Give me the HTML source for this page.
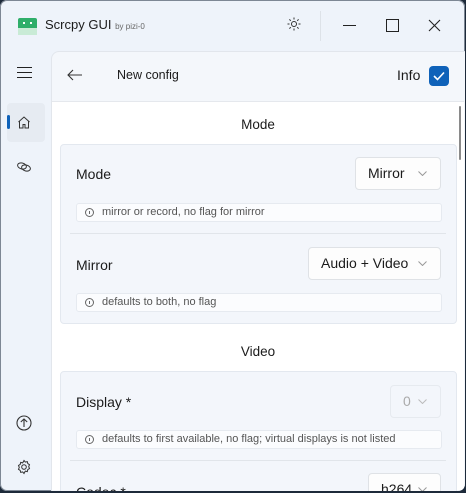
<!DOCTYPE html>
<html><head><style>
*{margin:0;padding:0;box-sizing:border-box}
body{width:466px;height:493px;overflow:hidden;background:#1d2a3a;font-family:"Segoe UI","Liberation Sans",sans-serif;color:#1b1b1b;position:relative}
.win{position:absolute;left:0;top:0;width:465px;height:491px;background:#eef3fa;border-radius:7px;overflow:hidden;box-shadow:inset 0 0 0 1px #7d8794}
.a{position:absolute}
.panel{left:51px;top:51px;width:420px;height:445px;background:#f4f7fb;border-top-left-radius:8px;border:1px solid #e2e6ec}
.scroll{left:52px;top:101px;width:412px;height:389px;background:#fff;border-top:1px solid #e5e8ed}
.card{background:#f3f6fb;border:1px solid #e3e8ef;border-radius:4px}
.lbl{font-size:14px}
.dd{background:#fdfdfd;border:1px solid #dfe2e6;border-radius:4px;font-size:14px;height:33px;line-height:31px;padding-left:12px}
.dd svg{position:absolute;right:13px;top:13px}
.info{background:#fbfcfe;border:1px solid #e6eaf0;border-radius:3px;height:19px;font-size:11px;color:#555;line-height:17px;padding-left:25px}
.info:before{content:"";position:absolute;left:8px;top:4px;width:7px;height:7px;border:1px solid #666;border-radius:50%}
.info:after{content:"";position:absolute;left:12px;top:7px;width:1px;height:3px;background:#666}
.h{font-size:13.5px;text-align:center;width:412px;left:52px}
</style></head><body>
<div class="win">
 <div class="a" style="left:18px;top:18px;width:19px;height:17px;background:#2fae6a;border-radius:2px"></div>
 <div class="a" style="left:18px;top:28px;width:19px;height:7px;background:#c9ebd6"></div>
 <div class="a" style="left:23px;top:22px;width:2px;height:2px;background:#fff"></div>
 <div class="a" style="left:30px;top:22px;width:2px;height:2px;background:#fff"></div>
 <div class="a" style="left:45px;top:17px;font-size:13px">Scrcpy GUI <span style="font-size:8px;color:#666">by pizi-0</span></div>
 <svg class="a" style="left:287px;top:17px" width="14" height="14" viewBox="0 0 14 14" stroke="#333" fill="none" stroke-width="1"><circle cx="7" cy="7" r="2.5"/><path d="M7 0.5v2M7 11.5v2M0.5 7h2M11.5 7h2M2.4 2.4l1.4 1.4M10.2 10.2l1.4 1.4M2.4 11.6l1.4-1.4M10.2 3.8l1.4-1.4"/></svg>
 <div class="a" style="left:320px;top:11px;width:1px;height:30px;background:#dde2e8"></div>
 <div class="a" style="left:343px;top:25px;width:13px;height:1px;background:#222"></div>
 <div class="a" style="left:386px;top:19px;width:13px;height:13px;border:1px solid #222"></div>
 <svg class="a" style="left:428px;top:19px" width="13" height="13" stroke="#222" stroke-width="1.1"><path d="M1 1l11 11M12 1L1 12"/></svg>
 <div class="a" style="left:17px;top:67px;width:15px;height:1.3px;background:#222"></div>
 <div class="a" style="left:17px;top:72px;width:15px;height:1.3px;background:#222"></div>
 <div class="a" style="left:17px;top:77px;width:15px;height:1.3px;background:#222"></div>
 <div class="a" style="left:7px;top:103px;width:38px;height:39px;background:#e6ebf2;border-radius:4px"></div>
 <div class="a" style="left:7px;top:115px;width:3px;height:14px;background:#0f62b9;border-radius:2px"></div>
 <svg class="a" style="left:17px;top:116px" width="14" height="13" viewBox="0 0 14 13" fill="none" stroke="#333" stroke-width="1"><path d="M1.5 6L7 1l5.5 5M2.5 5v7h3.5V8.5h2V12h3.5V5"/></svg>
 <svg class="a" style="left:16px;top:161px" width="16" height="12" viewBox="0 0 16 12" fill="none" stroke="#333" stroke-width="1"><ellipse cx="6" cy="5" rx="4.5" ry="3" transform="rotate(15 6 5)"/><ellipse cx="10" cy="7" rx="4.5" ry="3" transform="rotate(15 10 7)"/></svg>
 <svg class="a" style="left:16px;top:415px" width="16" height="16" fill="none" stroke="#333" stroke-width="1.1"><circle cx="8" cy="8" r="7"/><path d="M8 12V4M4.8 7L8 4l3.2 3"/></svg>
 <svg class="a" style="left:16px;top:459px" width="16" height="16" fill="none" stroke="#333" stroke-width="1"><circle cx="8" cy="8" r="2.3"/><path d="M8 1.5l1.3 1.6 2-.5.5 2 1.7 1.1-.8 1.9.8 1.9-1.7 1.1-.5 2-2-.5L8 14.5l-1.3-1.6-2 .5-.5-2L2.5 10.3l.8-1.9-.8-1.9 1.7-1.1.5-2 2 .5z"/></svg>
 <div class="a panel"></div>
 <svg class="a" style="left:67px;top:69px" width="16" height="12" fill="none" stroke="#333" stroke-width="1.1"><path d="M15 6H1M6 1L1 6l5 5"/></svg>
 <div class="a" style="left:117px;top:68px;font-size:12.5px">New config</div>
 <div class="a" style="left:397px;top:67px;font-size:14px">Info</div>
 <div class="a" style="left:429px;top:66px;width:20px;height:20px;background:#0f62b9;border-radius:4px"></div>
 <svg class="a" style="left:433px;top:71px" width="12" height="10" fill="none" stroke="#fff" stroke-width="1.6"><path d="M1 5l3.5 3.5L11 1.5"/></svg>
 <div class="a scroll"></div>
 <div class="a" style="left:459px;top:106px;width:2px;height:54px;background:#8a8a8a;border-radius:1px"></div>
 <div class="a h" style="top:117px">Mode</div>
 <div class="a card" style="left:60px;top:144px;width:397px;height:180px"></div>
 <div class="a lbl" style="left:76px;top:166px">Mode</div>
 <div class="a dd" style="left:355px;top:157px;width:86px">Mirror<svg width="9" height="5" fill="none" stroke="#999"><path d="M.5 .5l4 4 4-4"/></svg></div>
 <div class="a info" style="left:76px;top:203px;width:366px">mirror or record, no flag for mirror</div>
 <div class="a" style="left:70px;top:233px;width:376px;height:1px;background:#e1e5ea"></div>
 <div class="a lbl" style="left:76px;top:257px">Mirror</div>
 <div class="a dd" style="left:308px;top:247px;width:133px">Audio + Video<svg width="9" height="5" fill="none" stroke="#999"><path d="M.5 .5l4 4 4-4"/></svg></div>
 <div class="a info" style="left:76px;top:293px;width:366px">defaults to both, no flag</div>
 <div class="a h" style="top:344px">Video</div>
 <div class="a card" style="left:60px;top:371px;width:397px;height:140px"></div>
 <div class="a lbl" style="left:76px;top:394px">Display *</div>
 <div class="a dd" style="left:390px;top:385px;width:51px;background:#f3f6fb;color:#aaa;border-color:#e6eaef">0<svg width="9" height="5" fill="none" stroke="#bbb"><path d="M.5 .5l4 4 4-4"/></svg></div>
 <div class="a info" style="left:76px;top:430px;width:366px">defaults to first available, no flag; virtual displays is not listed</div>
 <div class="a" style="left:70px;top:460px;width:376px;height:1px;background:#e1e5ea"></div>
 <div class="a lbl" style="left:76px;top:484px">Codec *</div>
 <div class="a dd" style="left:368px;top:473px;width:73px">h264<svg width="9" height="5" fill="none" stroke="#999"><path d="M.5 .5l4 4 4-4"/></svg></div>
</div>
</body></html>
